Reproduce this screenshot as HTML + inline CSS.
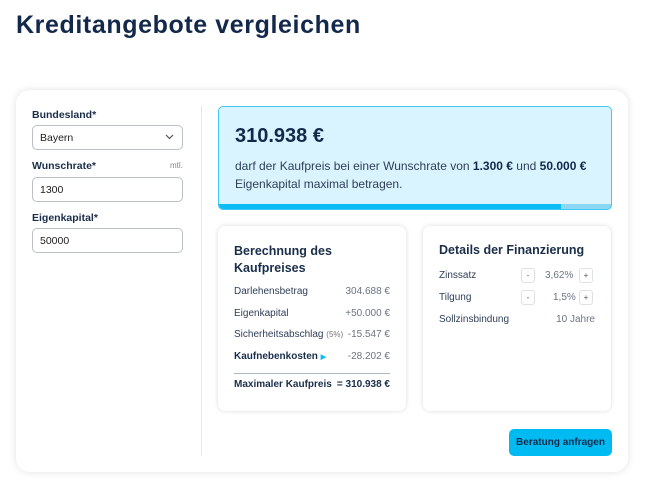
<!DOCTYPE html>
<html><head><meta charset="utf-8"><style>
*{box-sizing:border-box;margin:0;padding:0}
body{width:650px;height:498px;background:#fff;font-family:"Liberation Sans",sans-serif;color:#1a2e4a;position:relative;overflow:hidden}
.a{position:absolute}
h1{position:absolute;left:16px;top:11px;font-size:25px;font-weight:bold;color:#13294b;letter-spacing:0.6px}
.card{left:16px;top:90px;width:612px;height:382px;border-radius:14px;box-shadow:0 0 8px rgba(0,0,0,.12);background:#fff}
.lbl{font-size:10.5px;font-weight:bold;color:#1a2e4a}
.inp{width:151px;height:25px;border:1px solid #b9c0c8;border-radius:5px;font-size:10.5px;padding:6px 0 0 7px;color:#222}
.blue{left:218px;top:106px;width:394px;height:104px;background:#d9f4fe;border:1px solid #3fc8f3;border-radius:5px;overflow:hidden}
.sub{border-radius:7px;box-shadow:0 0 5px rgba(0,0,0,.14);background:#fff;height:185px;top:226px;width:188px}
.row{position:absolute;font-size:10px;color:#2e3f57}
.r{right:16px;text-align:right;color:#6b7482}
.pm{position:absolute;width:14px;height:15px;border:1px solid #dde1e5;border-radius:3px;font-size:8px;text-align:center;line-height:13px;color:#555}
</style></head><body>
<h1>Kreditangebote vergleichen</h1>
<div class="a card"></div>
<div class="a lbl" style="left:32px;top:109px">Bundesland*</div>
<div class="a inp" style="left:32px;top:125px">Bayern</div>
<svg class="a" style="left:165px;top:134px" width="9" height="6" viewBox="0 0 9 6"><path d="M1 1l3.5 3.5L8 1" fill="none" stroke="#555" stroke-width="1.2"/></svg>
<div class="a lbl" style="left:32px;top:160px">Wunschrate*</div>
<div class="a" style="left:170px;top:161px;font-size:8px;color:#888">mtl.</div>
<div class="a inp" style="left:32px;top:177px">1300</div>
<div class="a lbl" style="left:32px;top:212px">Eigenkapital*</div>
<div class="a inp" style="left:32px;top:228px">50000</div>
<div class="a" style="left:201px;top:106px;width:1px;height:350px;background:#e3e6ea"></div>
<div class="a blue">
<div class="a" style="left:16px;top:18px;font-size:20px;font-weight:bold;color:#13294b">310.938 €</div>
<div class="a" style="left:16px;top:50px;font-size:12px;line-height:18px;color:#2e3f57;width:375px">darf der Kaufpreis bei einer Wunschrate von <b style="color:#13294b">1.300 €</b> und <b style="color:#13294b">50.000 €</b> Eigenkapital maximal betragen.</div>
<div class="a" style="left:0;bottom:0;width:100%;height:5px;background:#0bbcf5"></div>
<div class="a" style="right:0;bottom:0;width:50px;height:5px;background:#8ad8f6"></div>
</div>
<div class="a sub" style="left:218px">
<div class="a" style="left:16px;top:17px;font-size:12.5px;font-weight:bold;line-height:17px;color:#1a2e4a">Berechnung des<br>Kaufpreises</div>
<div class="row" style="left:16px;top:60px">Darlehensbetrag</div><div class="row r" style="top:60px">304.688 €</div>
<div class="row" style="left:16px;top:82px">Eigenkapital</div><div class="row r" style="top:82px">+50.000 €</div>
<div class="row" style="left:16px;top:103px">Sicherheitsabschlag <span style="font-size:8px;color:#777">(5%)</span></div><div class="row r" style="top:103px">-15.547 €</div>
<div class="row" style="left:16px;top:125px;font-weight:bold;color:#1a2e4a">Kaufnebenkosten <span style="color:#0bbcf5;font-size:7px">▶</span></div><div class="row r" style="top:125px">-28.202 €</div>
<div class="a" style="left:16px;right:16px;top:147px;height:1px;background:#aab3c0"></div>
<div class="row" style="left:16px;top:153px;font-weight:bold;color:#1a2e4a">Maximaler Kaufpreis</div><div class="row r" style="top:153px;font-weight:bold;color:#1a2e4a">= 310.938 €</div>
</div>
<div class="a sub" style="left:423px">
<div class="a" style="left:16px;top:17px;font-size:12.5px;font-weight:bold;color:#1a2e4a">Details der Finanzierung</div>
<div class="row" style="left:16px;top:44px">Zinssatz</div>
<div class="pm" style="left:98px;top:42px">-</div><div class="row" style="left:122px;top:44px;color:#6b7482">3,62%</div><div class="pm" style="left:156px;top:42px">+</div>
<div class="row" style="left:16px;top:66px">Tilgung</div>
<div class="pm" style="left:98px;top:64px">-</div><div class="row" style="left:130px;top:66px;color:#6b7482">1,5%</div><div class="pm" style="left:156px;top:64px">+</div>
<div class="row" style="left:16px;top:88px">Sollzinsbindung</div><div class="row r" style="top:88px">10 Jahre</div>
</div>
<div class="a" style="left:509px;top:429px;width:103px;height:27px;background:#00bbf2;border-radius:5px;font-size:10px;font-weight:bold;color:#13294b;text-align:center;line-height:27px">Beratung anfragen</div>
</body></html>
